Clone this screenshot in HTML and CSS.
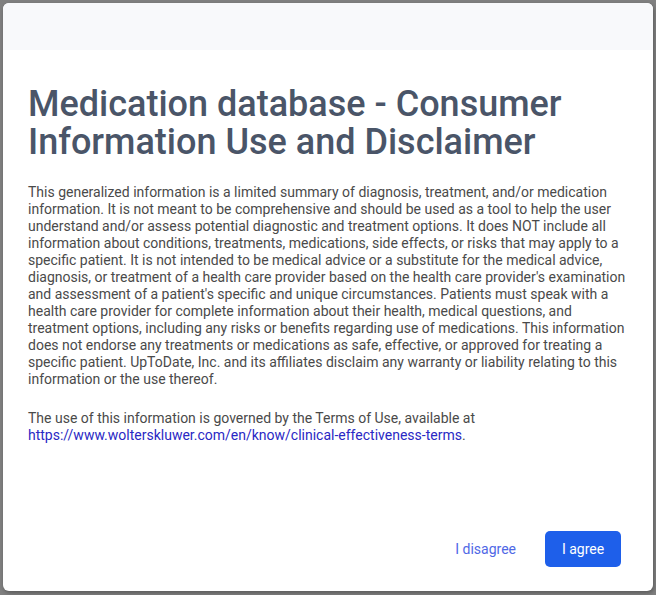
FILE: index.html
```html
<!DOCTYPE html>
<html lang="en">
<head>
<meta charset="utf-8">
<title>Medication database - Consumer Information Use and Disclaimer</title>
<link rel="stylesheet" href="styles.css">
</head>
<body>
<div class="overlay">
  <div class="modal" role="dialog" aria-labelledby="dlg-title">
    <div class="modal-header"></div>
    <div class="modal-body">
      <h1 id="dlg-title" class="title">Medication database - Consumer Information Use and Disclaimer</h1>
      <p class="text">This generalized information is a limited summary of diagnosis, treatment, and/or medication information. It is not meant to be comprehensive and should be used as a tool to help the user understand and/or assess potential diagnostic and treatment options. It does NOT include all information about conditions, treatments, medications, side effects, or risks that may apply to a specific patient. It is not intended to be medical advice or a substitute for the medical advice, diagnosis, or treatment of a health care provider based on the health care provider's examination and assessment of a patient's specific and unique circumstances. Patients must speak with a health care provider for complete information about their health, medical questions, and treatment options, including any risks or benefits regarding use of medications. This information does not endorse any treatments or medications as safe, effective, or approved for treating a specific patient. UpToDate, Inc. and its affiliates disclaim any warranty or liability relating to this information or the use thereof.</p>
      <p class="text">The use of this information is governed by the Terms of Use, available at <a class="link" href="#">https://www.wolterskluwer.com/en/know/clinical-effectiveness-terms</a>.</p>
    </div>
    <div class="modal-footer">
      <button class="btn btn-text" type="button">I disagree</button>
      <button class="btn btn-primary" type="button">I agree</button>
    </div>
  </div>
</div>
</body>
</html>
```

FILE: styles.css
```css
html, body {
  margin: 0;
  padding: 0;
}
body {
  background: #808080;
  font-family: Roboto, "Liberation Sans", Arial, sans-serif;
  width: 656px;
  height: 595px;
  overflow: hidden;
}
.overlay {
  padding: 3px;
}
.modal {
  width: 650px;
  height: 588px;
  background: #ffffff;
  border-radius: 6px;
  overflow: hidden;
  display: flex;
  flex-direction: column;
  box-shadow: 1px 2px 4px rgba(0, 0, 0, 0.3);
}
.modal-header {
  height: 47px;
  background: #f8f9fb;
  flex: none;
}
.modal-body {
  padding: 35px 21px 0 25px;
  flex: 1;
}
.title {
  margin: 0 0 23px 0;
  font-size: 36px;
  line-height: 38px;
  font-weight: 500;
  color: #4a5568;
}
.text {
  margin: 0 0 22px 0;
  font-size: 14px;
  line-height: 17px;
  color: #4a4a4a;
}
.link {
  color: #2a28c4;
  text-decoration: none;
}
.modal-footer {
  display: flex;
  justify-content: flex-end;
  align-items: center;
  gap: 29px;
  padding: 0 32px 24px 0;
}
.btn {
  font-family: Roboto, "Liberation Sans", Arial, sans-serif;
  font-size: 14px;
  border: none;
  cursor: pointer;
  height: 36px;
  border-radius: 5px;
}
.btn-text {
  background: transparent;
  color: #4f68e6;
  padding: 0;
}
.btn-primary {
  background: #1e5fea;
  color: #ffffff;
  width: 76px;
  padding: 0;
}
```
